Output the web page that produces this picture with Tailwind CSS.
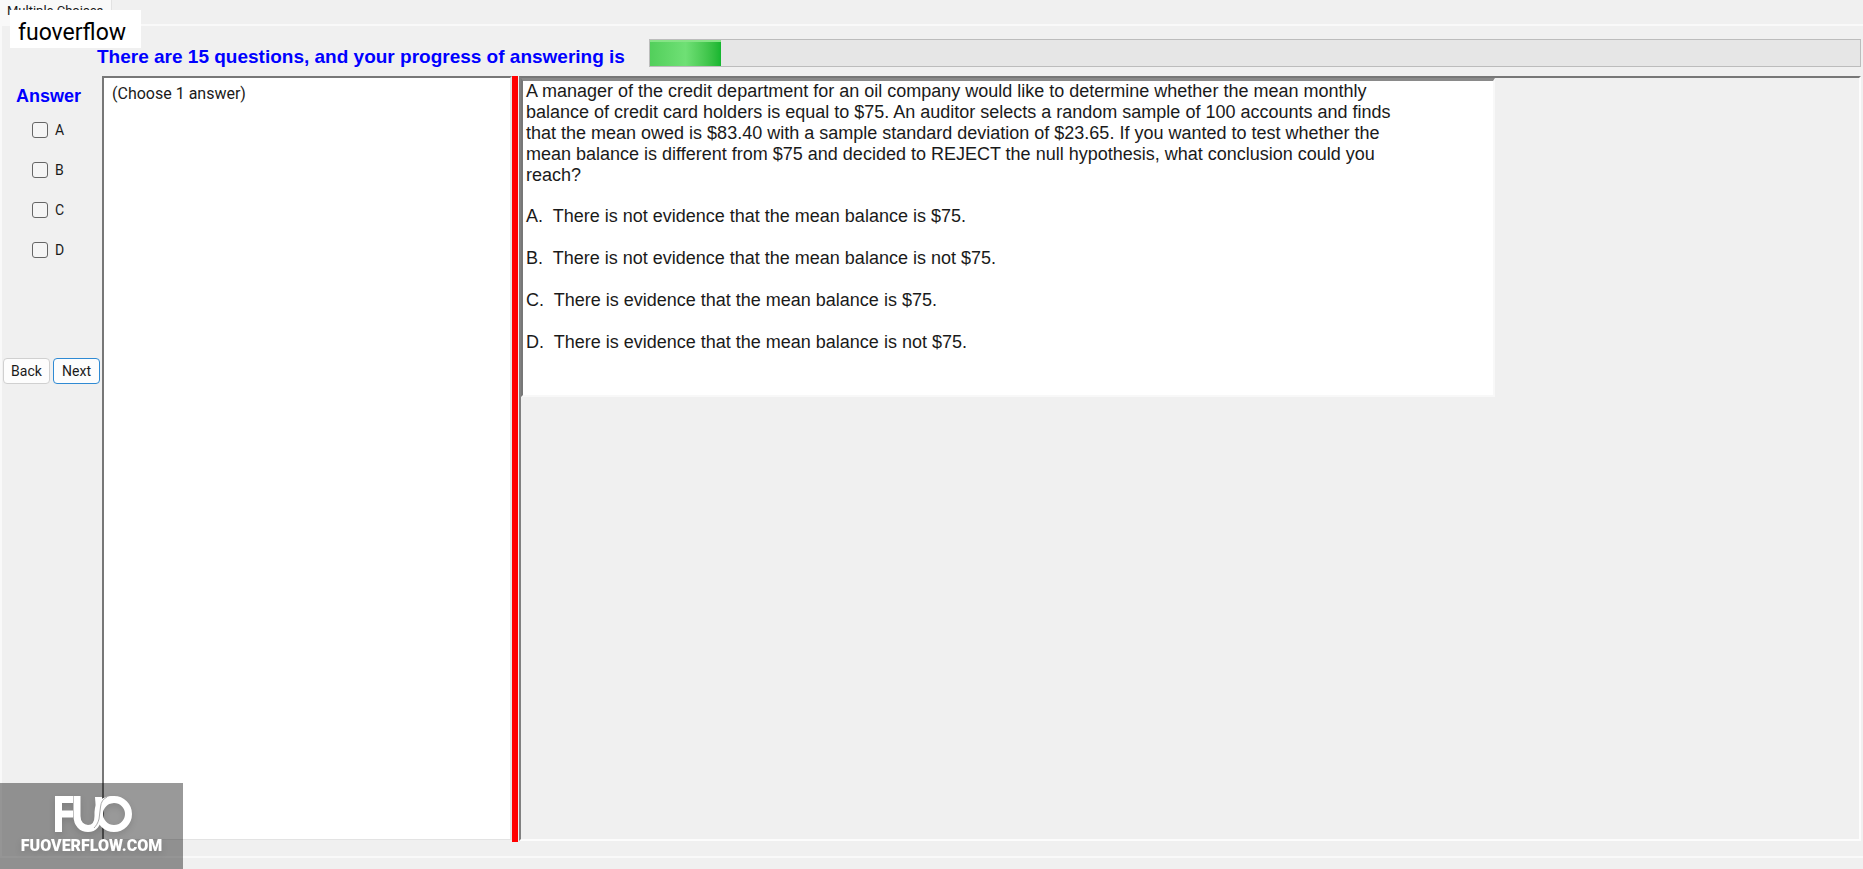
<!DOCTYPE html>
<html lang="en">
<head>
<meta charset="utf-8">
<meta name="viewport" content="width=device-width, initial-scale=1">
<title>Multiple Choices</title>
<script src="https://cdn.jsdelivr.net/npm/@tailwindcss/browser@4"></script>
</head>
<body class="relative flex h-screen flex-col overflow-hidden bg-[#f0f0f0] font-['Liberation_Sans',Arial,sans-serif] text-[#1a1a1a]">
  <nav class="flex h-6 shrink-0 items-start">
    <button type="button" class="h-[25px] w-28 border-r border-[#e2e2e2] bg-[#f9f9f9] pb-[3px] pl-[7px] text-left font-['Roboto',sans-serif] text-[13px] leading-5">Multiple Choices</button>
  </nav>

  <main class="flex min-h-0 flex-1 flex-col border-t-2 border-l-2 border-[#f9f9f9]">
    <header class="flex h-[50px] shrink-0 items-start pt-[13px] pr-[2px] pl-[95px]">
      <h1 id="progress-label" class="shrink-0 pt-1 text-[19px] leading-7 font-bold whitespace-nowrap text-[#0000ff]">There are 15 questions, and your progress of answering is</h1>
      <div role="progressbar" aria-labelledby="progress-label" aria-valuemin="0" aria-valuemax="15" aria-valuenow="1" class="ml-auto h-[28px] w-[1212px] border border-[#bcbcbc] bg-[#e6e6e6]">
        <div class="h-full w-[71px] border-t-2 border-[#86e486] bg-linear-to-r from-[#52cf5b] via-[#6fe075] to-[#14b62f]"></div>
      </div>
    </header>

    <div class="flex min-h-0 flex-1">
      <aside class="flex w-[100px] shrink-0 flex-col">
        <h2 class="pt-2 pl-[14px] text-[18px] leading-6 font-bold text-[#0000ff]">Answer</h2>
        <div class="flex flex-col gap-5 pt-[12px] pl-[30px] font-['Roboto',sans-serif] text-[14px] leading-5">
          <label class="flex items-center gap-[7px]"><input type="checkbox" class="size-4 appearance-none rounded-[3px] border border-[#666] bg-[#f5f5f5]">A</label>
          <label class="flex items-center gap-[7px]"><input type="checkbox" class="size-4 appearance-none rounded-[3px] border border-[#666] bg-[#f5f5f5]">B</label>
          <label class="flex items-center gap-[7px]"><input type="checkbox" class="size-4 appearance-none rounded-[3px] border border-[#666] bg-[#f5f5f5]">C</label>
          <label class="flex items-center gap-[7px]"><input type="checkbox" class="size-4 appearance-none rounded-[3px] border border-[#666] bg-[#f5f5f5]">D</label>
        </div>
        <div class="flex gap-[3px] pt-[98px] pl-px text-[14px]">
          <button type="button" class="h-[26px] w-[47px] rounded border border-[#d0d0d0] bg-[#fdfdfd] font-['Roboto',sans-serif]">Back</button>
          <button type="button" class="h-[26px] w-[47px] rounded border border-[#2f8ad3] bg-[#fdfdfd] font-['Roboto',sans-serif]">Next</button>
        </div>
      </aside>

      <section class="mb-4 w-[410px] shrink-0 border-t-2 border-r-2 border-b border-l-2 border-t-[#777] border-r-[#e6e6e6] border-b-[#e3e3e3] border-l-[#777] bg-white py-1 pl-2">
        <p class="font-['Roboto',sans-serif] text-[16px] leading-6">(Choose 1 answer)</p>
      </section>

      <div class="mr-px mb-[14px] w-[6px] shrink-0 bg-[#ff0000]"></div>

      <section class="mr-[2px] mb-[15px] min-w-0 flex-1 border-t-2 border-r-2 border-b-2 border-l-2 border-t-[#777] border-r-[#fcfcfc] border-b-[#fcfcfc] border-l-[#808080]">
        <article class="min-h-[319px] max-w-[974px] border-t-[3px] border-r-2 border-b-2 border-l-2 border-t-[#8a8a8a] border-r-[#f8f8f8] border-b-[#f8f8f8] border-l-[#777] bg-white pr-[70px] pl-[3px] text-[18px] leading-[21px]">
          <p>A manager of the credit department for an oil company would like to determine whether the mean monthly<br>balance of credit card holders is equal to $75. An auditor selects a random sample of 100 accounts and finds<br>that the mean owed is $83.40 with a sample standard deviation of $23.65. If you wanted to test whether the<br>mean balance is different from $75 and decided to REJECT the null hypothesis, what conclusion could you<br>reach?</p>
          <div class="flex flex-col gap-[21px] pt-5 whitespace-pre">
            <p>A.  There is not evidence that the mean balance is $75.</p>
            <p>B.  There is not evidence that the mean balance is not $75.</p>
            <p>C.  There is evidence that the mean balance is $75.</p>
            <p>D.  There is evidence that the mean balance is not $75.</p>
          </div>
        </article>
      </section>
    </div>
  </main>

  <footer class="h-[13px] shrink-0 border-t-2 border-[#f9f9f9]"></footer>

  <div class="absolute top-[10px] left-[10px] h-[38px] w-[131px] bg-white pl-2 font-['Roboto',sans-serif] text-[23px] leading-[45px] text-black">fuoverflow</div>

  <div class="absolute bottom-0 left-0 flex h-[86px] w-[183px] flex-col items-center bg-black/40 pt-3 text-white">
    <svg class="h-[38px] w-20 drop-shadow-md" viewBox="0 0 80 38" fill="none" stroke="currentColor" role="img" aria-label="FUO">
      <path d="M6.500 37V4.500H21M10 19H21" stroke-width="7"/>
      <path d="M25 1V21C25 29 30 33.500 36 33.500C42 33.500 46 29 46 21V17C46 9 52 4.500 62 4.500" stroke-width="7"/>
      <path d="M43 2H50V8L44 16Z" fill="currentColor" stroke="none"/>
      <circle cx="62" cy="19" r="14.500" stroke-width="7"/>
      <path d="M55 2C51 4 49 7 48.500 12L47 24C46 28 44 31 42 33" stroke="#aaa" stroke-width="1"/>
    </svg>
    <p class="pt-px font-['Roboto',sans-serif] text-[16px] leading-6 font-black drop-shadow-md">FUOVERFLOW.COM</p>
  </div>
</body>
</html>
